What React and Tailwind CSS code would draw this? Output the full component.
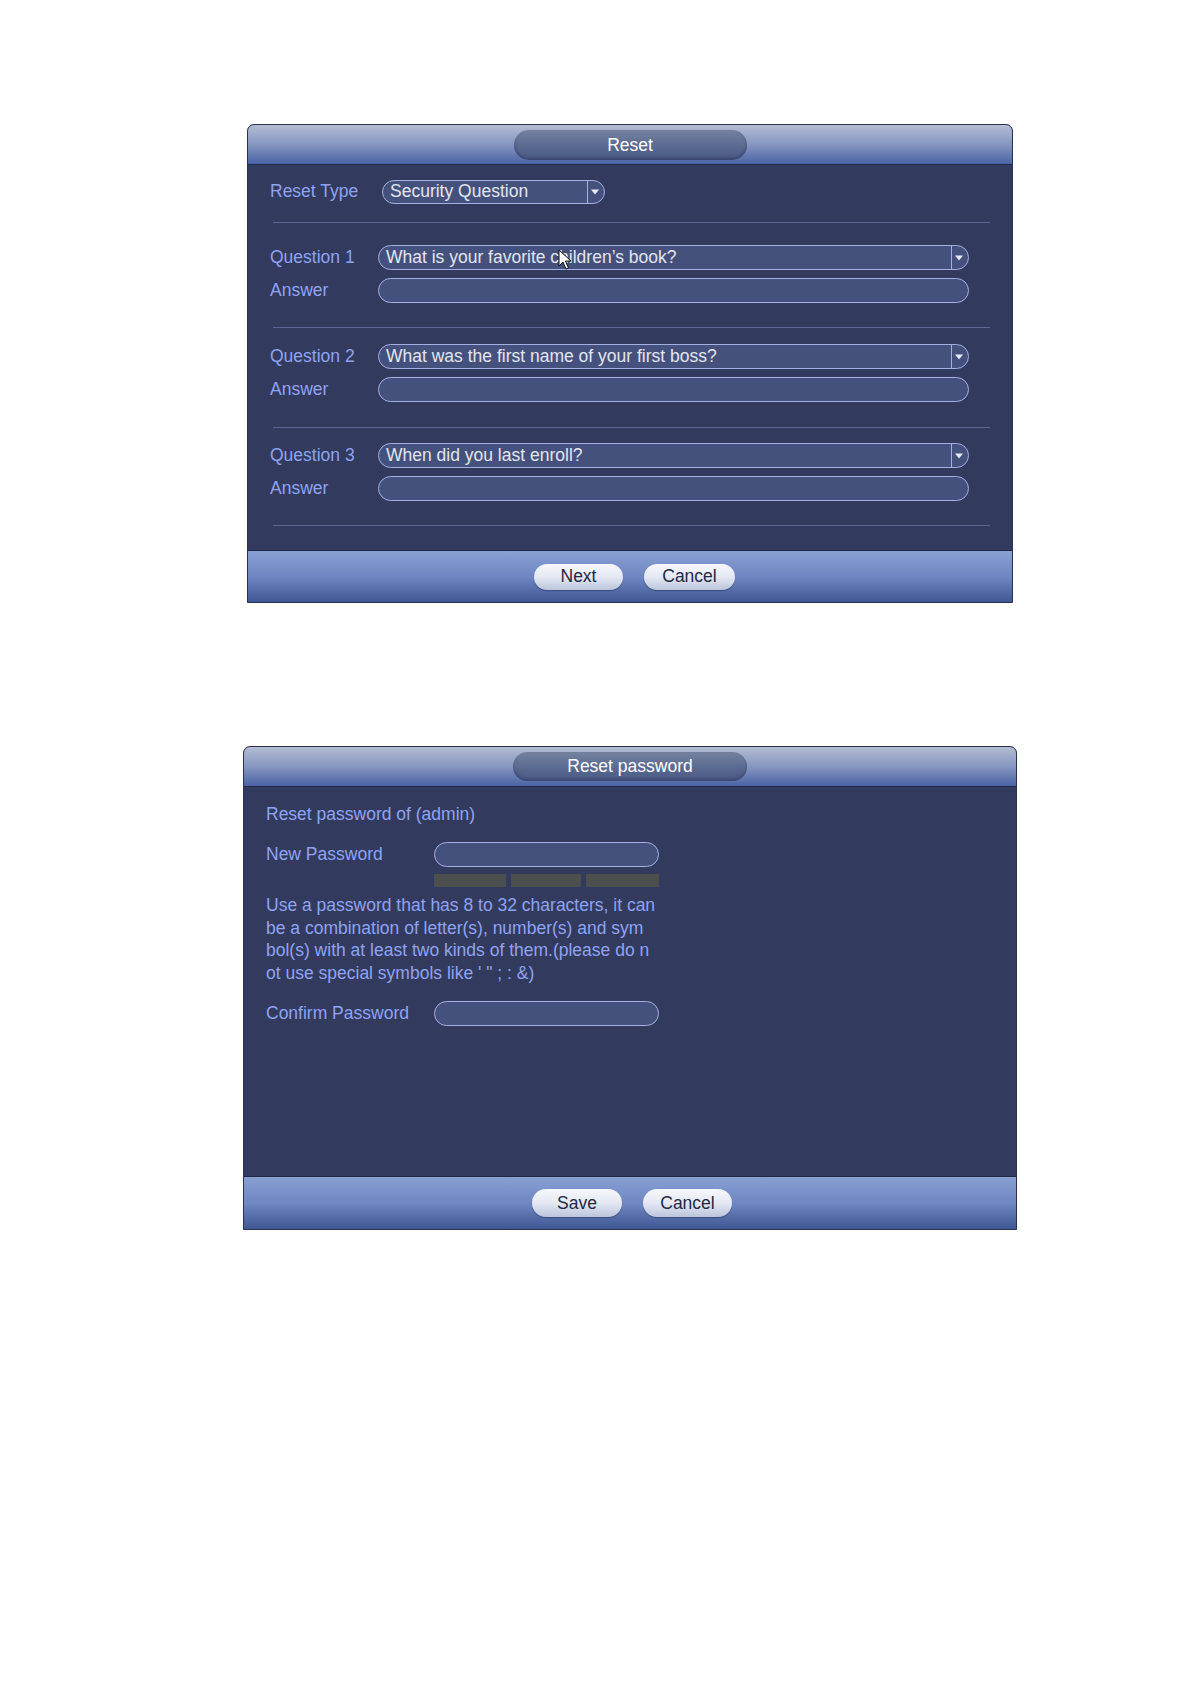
import React from "react";

const font = { fontFamily: '"Liberation Sans", Arial, sans-serif' };

const Select = ({ text, className }) => (
  <div
    className={
      "flex h-full items-stretch rounded-full border-[1.5px] border-[#a5b0e2] bg-[#45517d] " +
      className
    }
  >
    <div className="flex flex-1 items-center pl-[7px] text-[17.5px] leading-none text-[#e2e5ee]">
      {text}
    </div>
    <div className="flex w-[17px] items-center justify-center border-l-[1.5px] border-[#a5b0e2]">
      <svg width="8" height="6" viewBox="0 0 8 6" className="mr-[2px]">
        <path d="M0 0.5 L8 0.5 L4 5.5 Z" fill="#e8ebf5" />
      </svg>
    </div>
  </div>
);

const Input = ({ className }) => (
  <div
    className={
      "h-full rounded-full border-[1.5px] border-[#a5b0e2] bg-[#45517d] " + className
    }
  />
);

const Divider = ({ className }) => (
  <div className={"ml-[25px] mr-[22px] h-px shrink-0 bg-[#5c6690] " + className} />
);

const Label = ({ children, className }) => (
  <div className={"shrink-0 pl-[22px] text-[17.5px] leading-none text-[#8fa3f3] " + className}>
    {children}
  </div>
);

const Header = ({ title, pillWidth, pillHeight }) => (
  <div className="flex h-[40px] justify-center rounded-t-[6px] border-b border-[#222a48] bg-gradient-to-b from-[#b3bdd3] via-[#8596c0] to-[#4b63a4]">
    <div
      className={
        "mt-[5px] flex items-center justify-center rounded-full bg-gradient-to-b from-[#75839f] via-[#5c6b91] to-[#4a5985] text-[17.5px] text-white shadow-[inset_0_-2px_3px_rgba(40,50,90,0.5)] " +
        pillWidth +
        " " +
        pillHeight
      }
    >
      {title}
    </div>
  </div>
);

const Button = ({ children, className }) => (
  <div
    className={
      "flex items-center justify-center rounded-full bg-gradient-to-b from-[#f7f8fc] via-[#e4e8f2] to-[#bcc5dc] text-[17.5px] text-[#1f2747] shadow-[0_1px_1px_rgba(20,30,70,0.4)] " +
      className
    }
  >
    {children}
  </div>
);

const Footer = ({ height, children }) => (
  <div
    className={
      "flex items-center justify-center border-t border-[#1e2645] bg-gradient-to-b from-[#89a0d4] via-[#6f87c2] to-[#3f5792] " +
      height
    }
  >
    {children}
  </div>
);

const QuestionBlock = ({ num, text, mt }) => (
  <>
    <div className={"flex h-[25px] shrink-0 items-center " + mt}>
      <Label className="w-[130px]">Question {num}</Label>
      <Select text={text} className="w-[591px]" />
    </div>
    <div className="mt-[8px] flex h-[25px] shrink-0 items-center">
      <Label className="w-[130px]">Answer</Label>
      <Input className="w-[591px]" />
    </div>
  </>
);

const ResetDialog = () => (
  <div className="ml-[247px] w-[766px] rounded-t-[7px] border border-[#2a3252] bg-[#323a5d]">
    <Header title="Reset" pillWidth="w-[233px]" pillHeight="h-[30px]" />
    <div className="relative flex h-[385px] flex-col">
      <div className="mt-[15px] flex h-[24px] shrink-0 items-center">
        <Label className="w-[134px]">Reset Type</Label>
        <Select text="Security Question" className="w-[223px]" />
      </div>
      <Divider className="mt-[18px]" />
      <QuestionBlock num={1} text="What is your favorite children’s book?" mt="mt-[22px]" />
      <Divider className="mt-[24px]" />
      <QuestionBlock num={2} text="What was the first name of your first boss?" mt="mt-[16px]" />
      <Divider className="mt-[25px]" />
      <QuestionBlock num={3} text="When did you last enroll?" mt="mt-[15px]" />
      <Divider className="mt-[24px]" />

      {/* mouse pointer over the first question */}
      <svg
        width="14"
        height="22"
        viewBox="0 0 14 22"
        className="absolute left-[310px] top-[84px]"
      >
        <path
          d="M1 1 L1 17 L5 13 L8 20 L10.5 19 L7.5 12 L13 12 Z"
          fill="#ffffff"
          stroke="#111111"
          strokeWidth="1"
        />
      </svg>
    </div>
    <Footer height="h-[52px]">
      <div className="flex gap-[21px] pl-[9px]">
        <Button className="h-[26px] w-[89px]">Next</Button>
        <Button className="h-[26px] w-[91px]">Cancel</Button>
      </div>
    </Footer>
  </div>
);

const PasswordDialog = () => (
  <div className="ml-[243px] mt-[143px] w-[774px] rounded-t-[7px] border border-[#2a3252] bg-[#323a5d]">
    <Header title="Reset password" pillWidth="w-[234px]" pillHeight="h-[29px]" />
    <div className="flex h-[389px] flex-col">
      <div className="mt-[16px] pl-[22px] text-[17.5px] leading-[22px] text-[#8fa3f3]">
        Reset password of (admin)
      </div>
      <div className="mt-[17px] flex h-[25px] shrink-0 items-center">
        <Label className="w-[190px]">New Password</Label>
        <Input className="w-[225px]" />
      </div>
      <div className="ml-[190px] mt-[7px] flex h-[13px] w-[225px] shrink-0 gap-[5px]">
        <div className="w-[72px] bg-[#4b4f4e]" />
        <div className="w-[70px] bg-[#4b4f4e]" />
        <div className="w-[73px] bg-[#4b4f4e]" />
      </div>
      <div className="mt-[7px] pl-[22px] text-[17.5px] leading-[22.7px] text-[#8fa3f3]">
        <div>Use a password that has 8 to 32 characters, it can</div>
        <div>be a combination of letter(s), number(s) and sym</div>
        <div>bol(s) with at least two kinds of them.(please do n</div>
        <div>ot use special symbols like ' " ; : &amp;)</div>
      </div>
      <div className="mt-[16px] flex h-[25px] shrink-0 items-center">
        <Label className="w-[190px]">Confirm Password</Label>
        <Input className="w-[225px]" />
      </div>
    </div>
    <Footer height="h-[53px]">
      <div className="flex gap-[21px] pl-[4px]">
        <Button className="h-[28px] w-[90px]">Save</Button>
        <Button className="h-[28px] w-[89px]">Cancel</Button>
      </div>
    </Footer>
  </div>
);

const App = () => {
  return (
    <div className="min-h-[1684px] w-[1191px] bg-white pt-[124px]" style={font}>
      <ResetDialog />
      <PasswordDialog />
    </div>
  );
};

export default App;
